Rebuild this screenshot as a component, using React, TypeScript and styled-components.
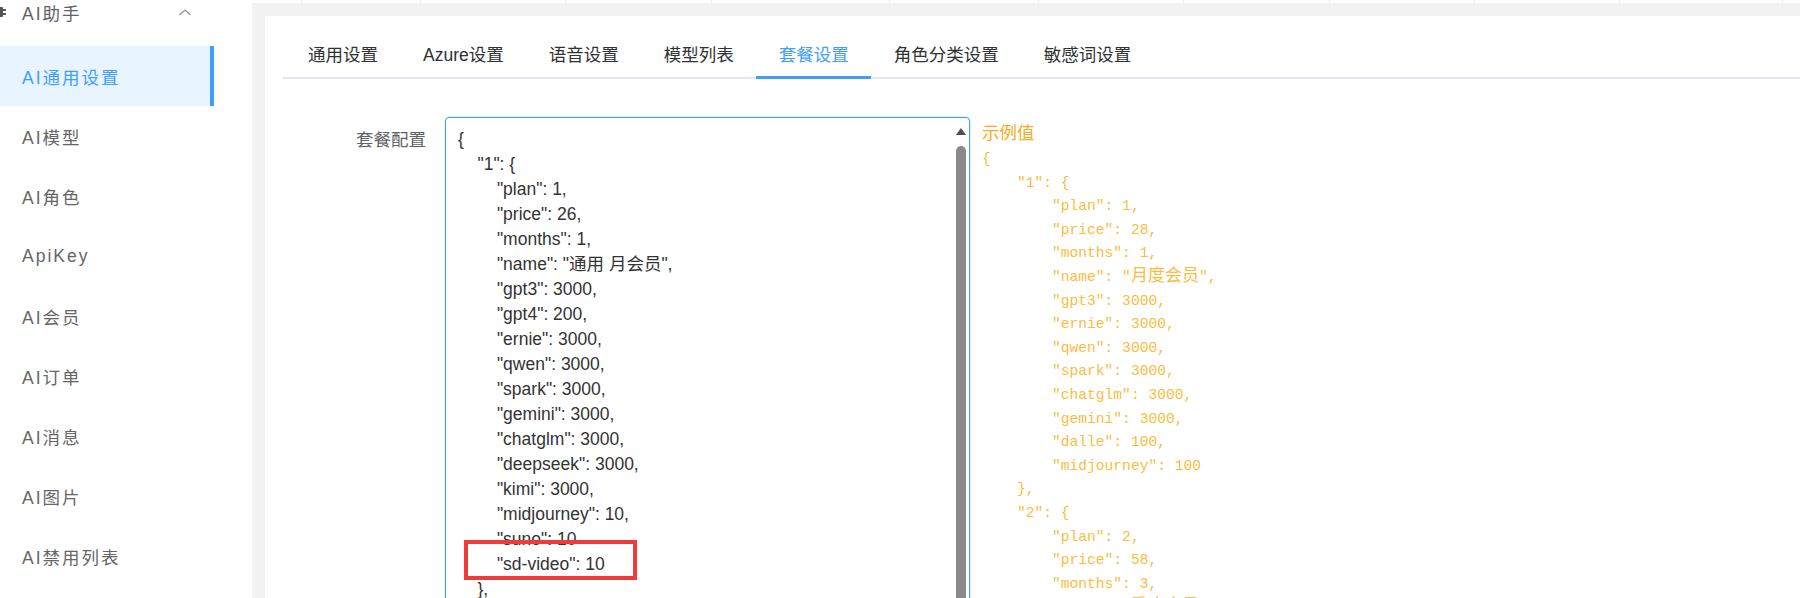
import styled, { createGlobalStyle } from "styled-components";

const MENU = [
  "AI通用设置",
  "AI模型",
  "AI角色",
  "ApiKey",
  "AI会员",
  "AI订单",
  "AI消息",
  "AI图片",
  "AI禁用列表",
];

const TABS = [
  "通用设置",
  "Azure设置",
  "语音设置",
  "模型列表",
  "套餐设置",
  "角色分类设置",
  "敏感词设置",
];

// widths of the header row that is cut off at the top of the page
const HEADER_COLS = [50, 119, 145, 146, 178, 149, 145, 146, 145, 145, 163];

const PLAN_VALUE = `{
    "1": {
        "plan": 1,
        "price": 26,
        "months": 1,
        "name": "通用 月会员",
        "gpt3": 3000,
        "gpt4": 200,
        "ernie": 3000,
        "qwen": 3000,
        "spark": 3000,
        "gemini": 3000,
        "chatglm": 3000,
        "deepseek": 3000,
        "kimi": 3000,
        "midjourney": 10,
        "suno": 10
        "sd-video": 10
    },
    "2": {
        "plan": 2,
        "price": 58,`;

const EXAMPLE_VALUE = `{
    "1": {
        "plan": 1,
        "price": 28,
        "months": 1,
        "name": "月度会员",
        "gpt3": 3000,
        "ernie": 3000,
        "qwen": 3000,
        "spark": 3000,
        "chatglm": 3000,
        "gemini": 3000,
        "dalle": 100,
        "midjourney": 100
    },
    "2": {
        "plan": 2,
        "price": 58,
        "months": 3,
        "name": "季度会员",
        "gpt3": 3000,`;

const GlobalStyle = createGlobalStyle`
  html, body {
    margin: 0;
    padding: 0;
    height: 100%;
    overflow: hidden;
  }
  body {
    background: #f2f2f2;
    font-family: "Liberation Sans", "Noto Sans CJK SC", sans-serif;
  }
  #root {
    height: 100%;
  }
`;

const Page = styled.div`
  display: flex;
  height: 598px;
  overflow: hidden;
`;

const Sidebar = styled.aside`
  width: 252px;
  flex-shrink: 0;
  background: #fff;
  overflow: hidden;
`;

const Menu = styled.ul`
  list-style: none;
  margin: -22px 0 0;
  padding: 0;
  width: 214px;
`;

const SubTitle = styled.li`
  height: 68px;
  display: flex;
  align-items: center;
  color: #606266;
  font-size: 17.5px;
  letter-spacing: 2px;
`;

const SubIcon = styled.svg`
  margin-left: -8px;
  margin-right: 16px;
  flex-shrink: 0;
`;

const SubArrow = styled.svg`
  margin-left: auto;
  margin-right: 23px;
`;

const MenuItem = styled.li<{ $active?: boolean }>`
  height: 60px;
  display: flex;
  align-items: center;
  padding-left: 22px;
  box-sizing: border-box;
  font-size: 17.5px;
  letter-spacing: 2px;
  color: ${({ $active }) => ($active ? "#409eff" : "#666")};
  background: ${({ $active }) => ($active ? "#e8f4ff" : "transparent")};
  border-right: 4px solid
    ${({ $active }) => ($active ? "#409eff" : "transparent")};
`;

const Main = styled.main`
  flex: 1;
  min-width: 0;
  display: flex;
  flex-direction: column;
`;

const HeaderStrip = styled.div`
  height: 3px;
  flex-shrink: 0;
  display: flex;
  background: #fff;
`;

const HeaderCell = styled.div<{ $w: number }>`
  width: ${({ $w }) => $w}px;
  flex-shrink: 0;
  box-sizing: border-box;
  border-right: 1px solid #ebeef5;
`;

const Content = styled.div`
  flex: 1;
  min-height: 0;
  padding: 13px 0 0 13px;
`;

const Card = styled.section`
  height: 100%;
  box-sizing: border-box;
  background: #fff;
  padding: 13px 0 0 18px;
`;

const TabNav = styled.div`
  display: flex;
  height: 50px;
  box-sizing: border-box;
  padding-left: 3px;
  border-bottom: 2px solid #e4e7ed;
`;

const Tab = styled.div<{ $active?: boolean }>`
  height: 50px;
  margin-bottom: -2px;
  box-sizing: border-box;
  padding: 2px 22.5px 0;
  display: flex;
  align-items: center;
  font-size: 17.5px;
  color: ${({ $active }) => ($active ? "#409eff" : "#303133")};
  border-bottom: 3px solid
    ${({ $active }) => ($active ? "#409eff" : "transparent")};

  &:first-child {
    padding-left: 22px;
  }
`;

const FormRow = styled.div`
  display: flex;
  align-items: flex-start;
  margin-top: 38px;
`;

const Label = styled.label`
  width: 162px;
  flex-shrink: 0;
  box-sizing: border-box;
  padding-right: 19px;
  text-align: right;
  line-height: 46px;
  font-size: 17.5px;
  color: #606266;
`;

const CodeBox = styled.div`
  position: relative;
  width: 525px;
  height: 520px;
  flex-shrink: 0;
  box-sizing: border-box;
  display: flex;
  border: 1px solid #409eff;
  border-radius: 4px;
  box-shadow: 0 0 0 1px rgba(64, 158, 255, 0.15);
  background: #fff;
  overflow: hidden;
`;

const CodeText = styled.div`
  flex: 1;
  padding: 8.5px 0 0 12px;
  white-space: pre;
  font-size: 17.5px;
  line-height: 25px;
  color: #333;
  overflow: hidden;
`;

const Scrollbar = styled.div`
  width: 17px;
  flex-shrink: 0;
  display: flex;
  flex-direction: column;
  align-items: center;
  padding-top: 10px;
`;

const ScrollArrow = styled.div`
  width: 0;
  height: 0;
  border-left: 5px solid transparent;
  border-right: 5px solid transparent;
  border-bottom: 7px solid #505050;
`;

const ScrollThumb = styled.div`
  width: 10px;
  flex: 1;
  margin-top: 11px;
  background: #8a8a8a;
  border-radius: 5px 5px 0 0;
`;

const Highlight = styled.div`
  position: absolute;
  left: 18px;
  top: 422px;
  width: 173px;
  height: 40px;
  box-sizing: border-box;
  border: 4px solid #ef3b3b;
  pointer-events: none;
`;

const Example = styled.div`
  margin-left: 12px;
  padding-top: 3px;
`;

const ExampleTitle = styled.div`
  font-size: 17.5px;
  line-height: 26px;
  color: #f7a928;
`;

const ExampleCode = styled.div`
  margin-top: 2px;
  white-space: pre;
  font-family: "Liberation Mono", "Noto Sans CJK SC", monospace;
  font-size: 14.6px;
  line-height: 23.6px;
  color: #fbbc3e;
`;

const Wide = styled.span`
  font-family: "Noto Sans CJK SC", sans-serif;
  font-size: 17px;
  line-height: 0;
`;

// CJK runs in the example are set wider, as the original monospace font does
const renderMono = (text: string) =>
  text
    .split(/([\u4e00-\u9fff]+)/)
    .map((part, i) => (i % 2 === 1 ? <Wide key={i}>{part}</Wide> : part));

export default function App() {
  return (
    <>
      <GlobalStyle />
      <Page>
        <Sidebar>
          <Menu>
            <SubTitle>
              <SubIcon width="14" height="12" viewBox="0 0 14 12">
                <rect x="2" y="1" width="9" height="10" rx="1" fill="#555" />
                <rect x="11" y="3" width="3" height="2" fill="#555" />
                <rect x="11" y="7" width="3" height="2" fill="#555" />
              </SubIcon>
              AI助手
              <SubArrow width="12" height="7" viewBox="0 0 12 7">
                <polyline
                  points="0.5,6 6,1 11.5,6"
                  fill="none"
                  stroke="#909399"
                  strokeWidth="1.2"
                />
              </SubArrow>
            </SubTitle>
            {MENU.map((item, i) => (
              <MenuItem key={item} $active={i === 0}>
                {item}
              </MenuItem>
            ))}
          </Menu>
        </Sidebar>
        <Main>
          <HeaderStrip>
            {HEADER_COLS.map((w, i) => (
              <HeaderCell key={i} $w={w} />
            ))}
          </HeaderStrip>
          <Content>
            <Card>
              <TabNav>
                {TABS.map((tab) => (
                  <Tab key={tab} $active={tab === "套餐设置"}>
                    {tab}
                  </Tab>
                ))}
              </TabNav>
              <FormRow>
                <Label>套餐配置</Label>
                <CodeBox>
                  <CodeText>{PLAN_VALUE}</CodeText>
                  <Scrollbar>
                    <ScrollArrow />
                    <ScrollThumb />
                  </Scrollbar>
                  <Highlight />
                </CodeBox>
                <Example>
                  <ExampleTitle>示例值</ExampleTitle>
                  <ExampleCode>{renderMono(EXAMPLE_VALUE)}</ExampleCode>
                </Example>
              </FormRow>
            </Card>
          </Content>
        </Main>
      </Page>
    </>
  );
}
